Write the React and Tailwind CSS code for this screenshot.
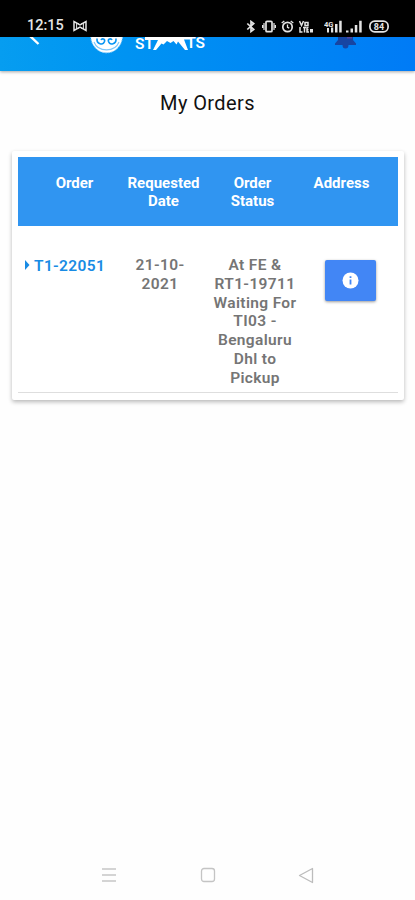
import React from 'react';

const COLUMNS = ['Order', 'Requested Date', 'Order Status', 'Address'];

const ORDERS = [
    {
        id: 'T1-22051',
        date: '21-10-2021',
        status: 'At FE & RT1-19711 Waiting For TI03 - Bengaluru Dhl to Pickup',
    },
];

function StatusBar() {
    return (
        <div className="h-[37px] shrink-0 bg-black text-[#e4e4e4] flex items-center pt-[15px] pl-[27px] pr-[26px]">
            <span className="text-[14.5px] leading-none w-[37px] mt-[1px] font-medium whitespace-nowrap">12:15</span>
            <svg className="ml-[9px]" width="14" height="12" viewBox="0 0 14 12" fill="none" stroke="currentColor" strokeWidth="1.5">
                <path d="M1 10.5v-9l6 3.5 6-3.5v9L7 7z" />
                <path d="M3.6 3v6M10.4 3v6M5 8.6l2-1.5 2 1.5M5 3.4l2 1.5 2-1.5" strokeWidth="1" />
            </svg>

            <div className="ml-auto flex items-center">
                {/* bluetooth */}
                <svg width="10" height="13" viewBox="0 0 10 13" fill="none" stroke="currentColor" strokeWidth="1.7">
                    <path d="M1.3 3.5l6.4 6L5 11.5V1.5l2.7 2-6.4 6" />
                </svg>
                {/* vibrate */}
                <svg className="ml-[6px]" width="14" height="13" viewBox="0 0 14 13" fill="none" stroke="currentColor" strokeWidth="1.7">
                    <rect x="4" y="1.3" width="6" height="10.4" rx="1" />
                    <path d="M2 3v7M12 3v7M.6 5v3M13.4 5v3" strokeWidth="1.2" />
                </svg>
                {/* alarm */}
                <svg className="ml-[5px]" width="13" height="13" viewBox="0 0 13 13" fill="none" stroke="currentColor" strokeWidth="1.7">
                    <circle cx="6.5" cy="7" r="4.7" />
                    <path d="M.7 3L3.3 1M12.3 3L9.7 1M6.5 4.5V7.3l1.8.9" strokeWidth="1.3" />
                </svg>
                {/* volte */}
                <svg className="ml-[5px]" width="15" height="13" viewBox="0 0 15 13" fill="none" stroke="currentColor" strokeWidth="1.5">
                    <path d="M.5 1l2 4.5 2-4.500M6 2.500h3v3H6zM1 7v5h2.500M4 7.500h3M5.500 7.500V12.500M9.500 7.500H8v4.500h2M8 9.800h1.500" />
                    <path d="M12.500 9v3.500" strokeWidth="3" />
                </svg>
                {/* first sim */}
                <svg className="ml-[10px]" width="18" height="13" viewBox="0 0 18 13" fill="currentColor">
                    <text x="0" y="6.5" fontSize="8" fontWeight="700" textLength="9.5" lengthAdjust="spacingAndGlyphs">4G</text>
                    <path d="M3 8h2v4.500H3zM7 7.500h2.200v5H7zM11 4h2.500v8.500H11zM15.200.8h2.500v11.700h-2.500z" />
                </svg>
                {/* second sim */}
                <svg className="ml-[4px]" width="16" height="13" viewBox="0 0 16 13" fill="currentColor">
                    <path d="M0 10.500h2.500v2H0zM4.500 8.500h2.500v4H4.500zM8.800 5h2.500v7.500H8.800zM13.200.8h2.500v11.700h-2.500z" />
                </svg>
                <svg className="ml-[7px]" width="20" height="13" viewBox="0 0 20 13" fill="none" stroke="currentColor">
                    <rect x=".9" y="1.1" width="18.2" height="10.8" rx="4.8" strokeWidth="1.7" />
                    <text x="10" y="9.6" textAnchor="middle" fontSize="9" fontWeight="700" fill="currentColor" stroke="none">84</text>
                </svg>
            </div>
        </div>
    );
}

function Header() {
    return (
        <div className="h-[34px] shrink-0 overflow-hidden bg-linear-to-r from-[#069df0] to-[#007bf6] shadow-[0_1px_3px_rgba(0,0,0,0.35)] flex items-start text-white">
            <svg className="ml-[29px] shrink-0" width="12" height="10" viewBox="0 0 12 10">
                <path d="M1-1l8.5 8" stroke="white" strokeWidth="2.4" />
            </svg>
            {/* emblem, its upper half is under the status bar */}
            <svg className="ml-[49px] shrink-0" width="34" height="18" viewBox="0 0 34 18" fill="none">
                <path d="M.8-1a15.800 16.800 0 0 0 31.600 0z" fill="white" stroke="#9fd5fb" strokeDasharray="2 1" />
                <path d="M7 1.500c-.5 6 6 7 7.500 3 .8-2.500-2.500-3.500-3.500-1.500M26 1.500c.5 6-6 7-7.500 3-.8-2.500 2.500-3.500 3.500-1.500" stroke="#0894f3" strokeWidth="1.600" />
                <path d="M4 5c4 10.500 21 10.500 25 0" stroke="#7cc6fa" strokeWidth="1.100" />
            </svg>
            {/* wordmark with the mountain between the letters */}
            <div className="ml-[11px] w-[70px] h-[19px] shrink-0 relative flex justify-between text-[15.5px] leading-[18px] font-semibold">
                <span className="-mt-[2px] h-[19px]">ST</span>
                <svg className="absolute left-[10px] top-0" width="50" height="14" viewBox="0 0 50 14" fill="white">
                    <path d="M0 0h47v2.500h-8L43 13h-3L33 4.500l-1.500 3-3-3.500-3 2-3.500-2-3.500 3.500-2-1L11 13H8l5-10H0z" />
                </svg>
                <span className="-mt-[3px] h-[19px]">TS</span>
            </div>
            <svg className="ml-[130px] shrink-0" width="21" height="12" viewBox="0 0 21 12" fill="#1745a2">
                <path d="M3 0h15v3l3 3.500V8h-7.500a3 3.500 0 0 1-6 0H0V6.500L3 3z" />
                <path d="M12 0h5v1.500h-5z" fill="#5546a0" />
            </svg>
        </div>
    );
}

function OrderRow({ order }) {
    return (
        <div className="h-[167px] pt-[30px] flex text-[15.5px] leading-[18.8px] font-semibold tracking-[0.35px] text-[#757575] text-center border-b border-[#dedede]">
            <div className="w-[87px] ml-[7px] flex items-start text-[#188be4]">
                <svg className="mt-[4px] mr-[4px] shrink-0" width="5" height="10" viewBox="0 0 5 10" fill="currentColor">
                    <path d="M0 0l4.5 5L0 10z" />
                </svg>
                <span className="whitespace-nowrap mt-[1px]">{order.id}</span>
            </div>
            <div className="w-[58px] ml-[19px]">{order.date}</div>
            <div className="w-[88px] ml-[22px]">{order.status}</div>
            <button className="ml-[26px] mt-[4px] w-[51px] h-[41px] rounded-[2px] bg-[#4286f5] shadow-[0_1px_3px_rgba(0,0,0,0.4)] flex items-center justify-center">
                <svg width="17" height="17" viewBox="0 0 17 17">
                    <circle cx="8.5" cy="8.5" r="8" fill="white" />
                    <path d="M7.6 4.3h1.8v1.8H7.6zM7.6 7.5h1.8v5H7.6z" fill="#4286f5" />
                </svg>
            </button>
        </div>
    );
}

function NavBar() {
    return (
        <div className="mt-auto h-[50px] flex items-center justify-between px-[101px]">
            <svg width="16" height="16" viewBox="0 0 16 16" stroke="#c6c6c6" strokeWidth="1.3">
                <path d="M1 2h14M1 8h14M1 14h14" />
            </svg>
            <svg width="16" height="16" viewBox="0 0 16 16" fill="none" stroke="#c4c4c4" strokeWidth="1.3">
                <rect x="1.5" y="1.5" width="13" height="13" rx="2.5" />
            </svg>
            <svg width="16" height="17" viewBox="0 0 16 17" fill="none" stroke="#bcbcbc" strokeWidth="1.3" strokeLinejoin="round">
                <path d="M14.5 1.500v14L1.500 8.500z" />
            </svg>
        </div>
    );
}

export default function App() {
    return (
        <div className="w-[415px] h-[900px] overflow-hidden bg-[#fefefe] font-['Roboto',sans-serif] flex flex-col">
            <StatusBar />
            <Header />

            <h1 className="mt-[20px] text-center text-[20px] leading-[24px] font-normal tracking-[0.4px] text-[#111]">My Orders</h1>

            <div className="mt-[36px] ml-[12px] mr-[11px] px-[6px] pt-[6px] pb-[7px] rounded-[2px] bg-white shadow-[0_2px_4px_rgba(0,0,0,0.28)]">
                <div className="h-[69px] bg-[#3095f1] px-[12px] pt-[18px] grid grid-cols-4 text-center text-[15px] leading-[17.5px] font-bold text-white">
                    {COLUMNS.map((col) => (
                        <div key={col} className="flex justify-center">
                            <span className="w-min">{col}</span>
                        </div>
                    ))}
                </div>
                {ORDERS.map((order) => (
                    <OrderRow key={order.id} order={order} />
                ))}
            </div>

            <NavBar />
        </div>
    );
}
